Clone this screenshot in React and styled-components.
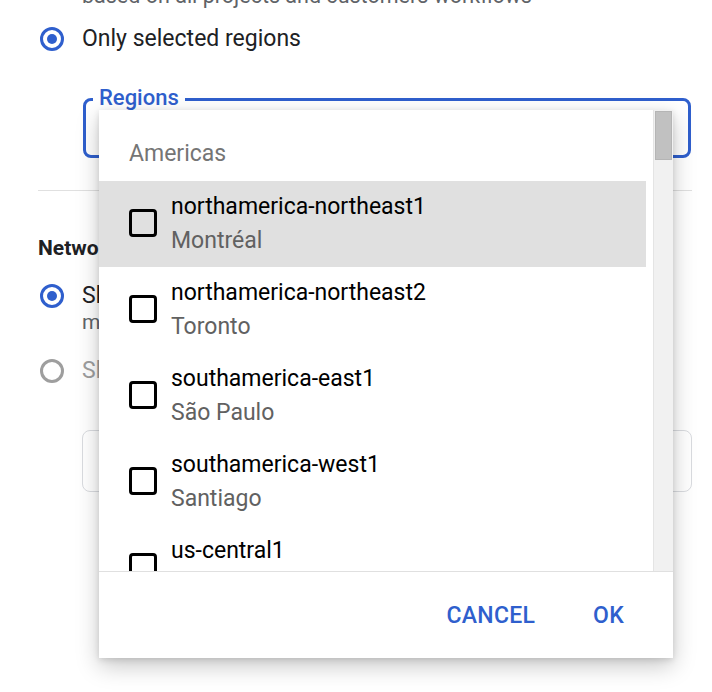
import React from 'react';
import styled, { createGlobalStyle } from 'styled-components';

const GlobalStyle = createGlobalStyle`
  html, body {
    margin: 0;
    padding: 0;
    background: #ffffff;
  }
  body {
    font-family: Roboto, "Noto Sans", "Liberation Sans", sans-serif;
  }
`;

const BLUE = '#2f5fcd';

const Page = styled.div`
  position: relative;
  width: 712px;
  height: 692px;
  overflow: hidden;
  box-sizing: border-box;
  padding: 0 20px 0 38px;
  background: #ffffff;
`;

const Hint = styled.div`
  margin: -16px 0 0 44px;
  height: 24px;
  line-height: 24px;
  font-size: 21.5px;
  color: #5f6368;
  white-space: nowrap;
`;

const RadioRow = styled.div`
  display: flex;
  align-items: center;
  gap: 18px;
  height: 24px;
  margin-top: ${(p) => p.$top}px;
  margin-left: 2px;
`;

const Radio = styled.span`
  position: relative;
  flex: none;
  width: 24px;
  height: 24px;
  box-sizing: border-box;
  border-radius: 50%;
  border: 3px solid ${(p) => (p.$checked ? BLUE : '#9e9e9e')};

  &::after {
    content: '';
    display: ${(p) => (p.$checked ? 'block' : 'none')};
    position: absolute;
    left: 4px;
    top: 4px;
    width: 10px;
    height: 10px;
    border-radius: 50%;
    background: ${BLUE};
  }
`;

const RadioLabel = styled.span`
  font-size: 23px;
  line-height: 24px;
  color: ${(p) => (p.$muted ? '#9e9e9e' : '#202124')};
  white-space: nowrap;
`;

const RadioHelp = styled.div`
  margin: 2px 0 0 44px;
  font-size: 21px;
  line-height: 24px;
  color: #5f6368;
  white-space: nowrap;
`;

const FieldWrap = styled.div`
  position: relative;
  margin: 47px 0 0 45px;
  width: 608px;
  height: 60px;
  box-sizing: border-box;
  border: 3px solid ${BLUE};
  border-radius: 8px;
`;

const FieldLabel = styled.span`
  position: absolute;
  left: 7px;
  top: -16px;
  padding: 0 6px;
  background: #ffffff;
  font-size: 22px;
  font-weight: 500;
  line-height: 26px;
  color: ${BLUE};
`;

const Divider = styled.div`
  margin-top: 32px;
  height: 1px;
  background: #e0e0e0;
`;

const Heading = styled.div`
  margin-top: 45px;
  height: 24px;
  line-height: 24px;
  font-size: 21px;
  font-weight: 700;
  color: #202124;
  white-space: nowrap;
`;

const InputBox = styled.div`
  margin: 47px 0 0 44px;
  width: 610px;
  height: 62px;
  box-sizing: border-box;
  border: 1px solid #dadce0;
  border-radius: 8px;
`;

const Menu = styled.div`
  position: absolute;
  left: 13px;
  top: 9px;
  width: 574px;
  height: 548px;
  display: flex;
  flex-direction: column;
  background: #ffffff;
  box-shadow: 0 8px 22px rgba(0, 0, 0, 0.22), 0 2px 6px rgba(0, 0, 0, 0.12);
  z-index: 2;
`;

const ScrollArea = styled.div`
  display: flex;
  height: 461px;
  overflow: hidden;
`;

const List = styled.div`
  flex: 1;
  overflow: hidden;
`;

const GroupHeader = styled.div`
  box-sizing: border-box;
  height: 71px;
  padding: 15px 0 0 30px;
  display: flex;
  align-items: center;
  font-size: 23px;
  color: #757575;
`;

const Item = styled.div`
  display: flex;
  align-items: flex-start;
  height: 86px;
  margin-right: 7px;
  padding-left: 30px;
  background: ${(p) => (p.$active ? '#e0e0e0' : 'transparent')};
`;

const Checkbox = styled.span`
  flex: none;
  width: 28px;
  height: 28px;
  margin-top: 28px;
  box-sizing: border-box;
  border: 3px solid #000000;
  border-radius: 4px;
`;

const ItemText = styled.div`
  display: flex;
  flex-direction: column;
  gap: 6px;
  padding: 12px 0 0 14px;
`;

const ItemTitle = styled.div`
  font-size: 23px;
  line-height: 28px;
  color: #000000;
  white-space: nowrap;
`;

const ItemSub = styled.div`
  font-size: 23px;
  line-height: 28px;
  color: #616161;
  white-space: nowrap;
`;

const Scrollbar = styled.div`
  flex: none;
  width: 20px;
  box-sizing: border-box;
  border-left: 1px solid #e4e4e4;
  background: #f1f1f1;
  padding: 1px 1px 0 1px;
`;

const Thumb = styled.div`
  height: 49px;
  box-sizing: border-box;
  background: #c1c1c1;
  border: 1px solid #b5b5b5;
`;

const Footer = styled.div`
  flex: 1;
  display: flex;
  justify-content: flex-end;
  align-items: center;
  gap: 42px;
  padding-right: 41px;
  border-top: 1px solid #e0e0e0;
`;

const TextButton = styled.button`
  border: none;
  background: transparent;
  padding: 6px 8px;
  font-family: Roboto, "Liberation Sans", sans-serif;
  font-size: 23px;
  font-weight: 500;
  letter-spacing: 0.25px;
  text-transform: uppercase;
  color: ${BLUE};
  cursor: pointer;
`;

const regions = [
  { id: 'northamerica-northeast1', city: 'Montréal' },
  { id: 'northamerica-northeast2', city: 'Toronto' },
  { id: 'southamerica-east1', city: 'São Paulo' },
  { id: 'southamerica-west1', city: 'Santiago' },
  { id: 'us-central1', city: 'Iowa' },
];

export default function App() {
  return (
    <Page>
      <GlobalStyle />
      <Hint>based on all projects and customers workflows</Hint>
      <RadioRow $top={19}>
        <Radio $checked />
        <RadioLabel>Only selected regions</RadioLabel>
      </RadioRow>

      <FieldWrap>
        <FieldLabel>Regions</FieldLabel>
        <Menu>
          <ScrollArea>
            <List>
              <GroupHeader>Americas</GroupHeader>
              {regions.map((r, i) => (
                <Item key={r.id} $active={i === 0}>
                  <Checkbox />
                  <ItemText>
                    <ItemTitle>{r.id}</ItemTitle>
                    <ItemSub>{r.city}</ItemSub>
                  </ItemText>
                </Item>
              ))}
            </List>
            <Scrollbar>
              <Thumb />
            </Scrollbar>
          </ScrollArea>
          <Footer>
            <TextButton>Cancel</TextButton>
            <TextButton>OK</TextButton>
          </Footer>
        </Menu>
      </FieldWrap>

      <Divider />
      <Heading>Network tier</Heading>
      <RadioRow $top={24}>
        <Radio $checked />
        <RadioLabel>Show premium network routes</RadioLabel>
      </RadioRow>
      <RadioHelp>more traffic goes over the premium backbone</RadioHelp>
      <RadioRow $top={25}>
        <Radio />
        <RadioLabel $muted>Show standard network routes</RadioLabel>
      </RadioRow>
      <InputBox />
    </Page>
  );
}
